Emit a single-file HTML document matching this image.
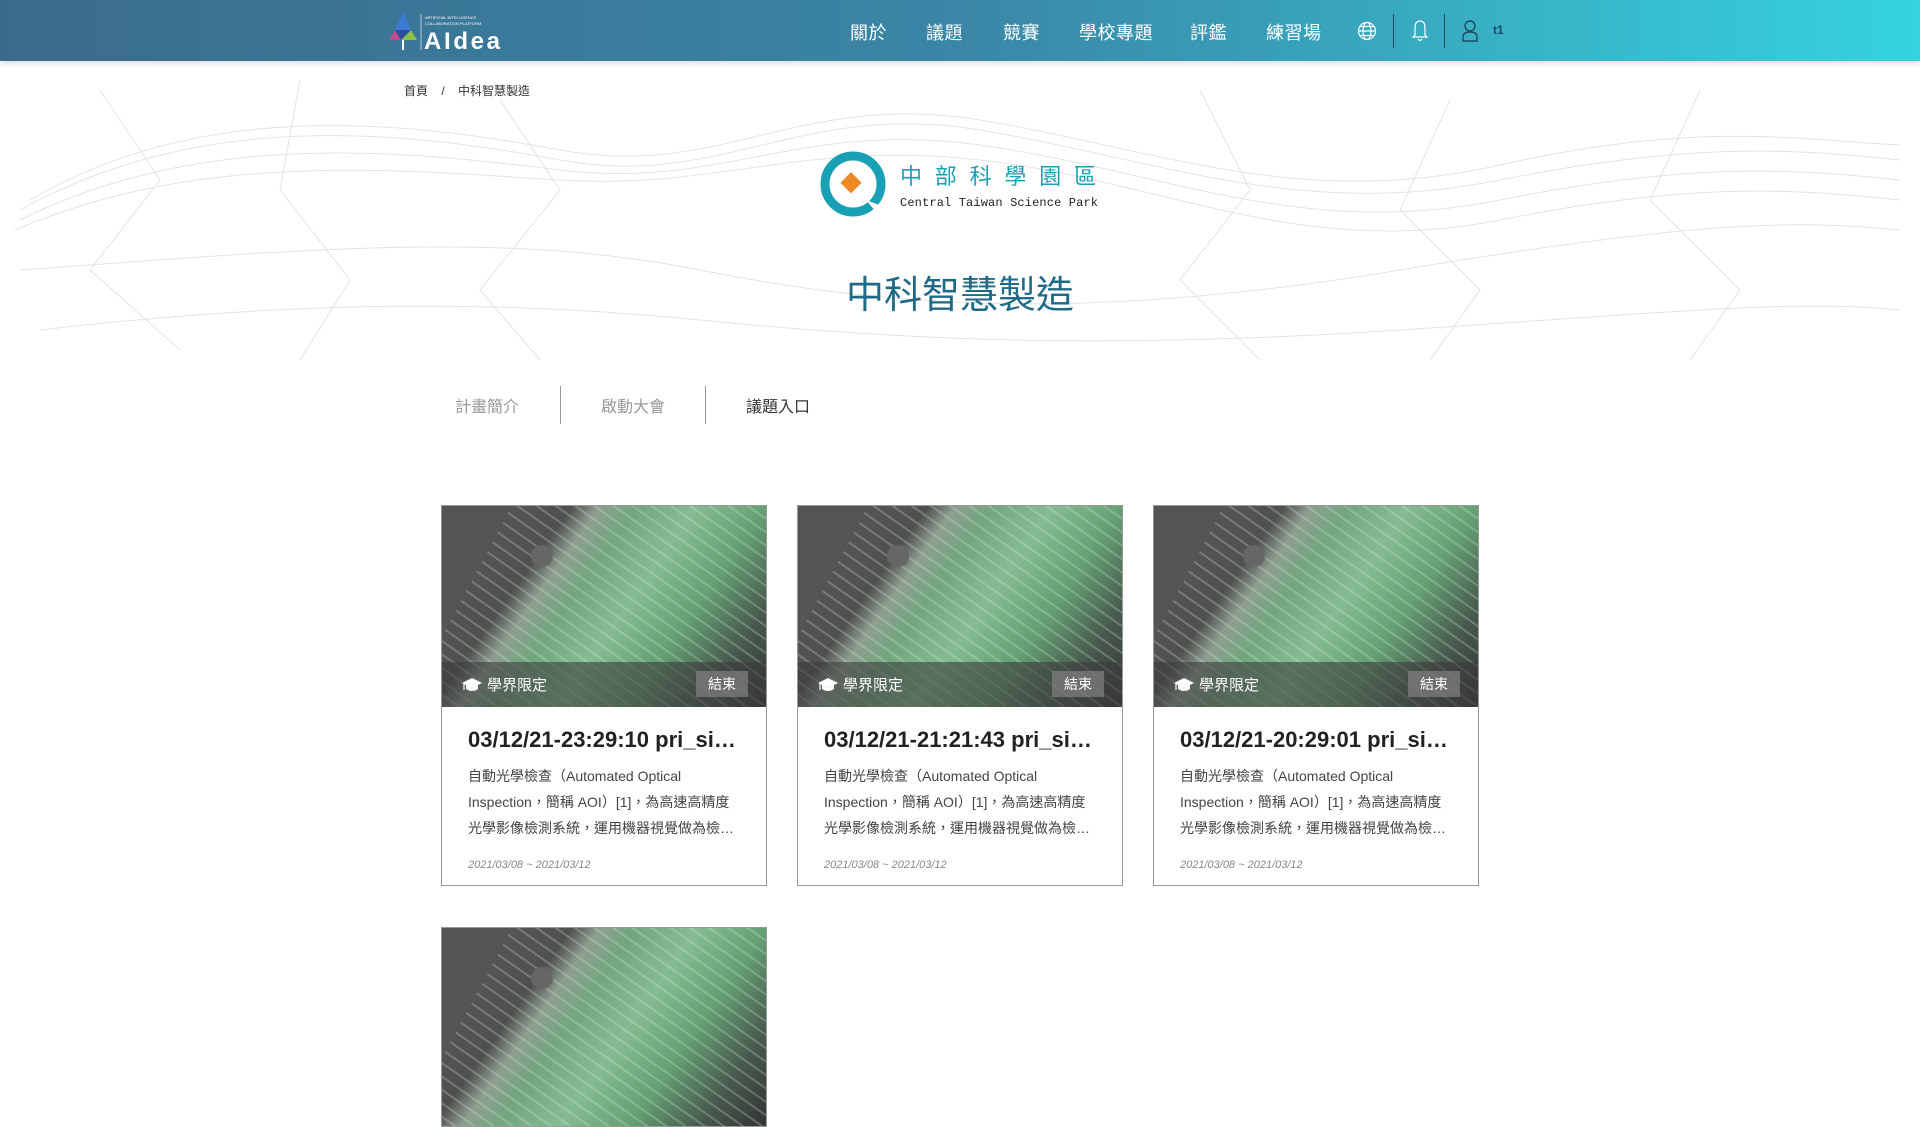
<!DOCTYPE html>
<html><head><meta charset="utf-8">
<style>
*{margin:0;padding:0;box-sizing:border-box}
body{width:1920px;height:1080px;overflow:hidden;background:#fff;font-family:"Liberation Sans","Noto Sans CJK TC",sans-serif;position:relative}
.hdr{position:absolute;left:0;top:0;width:1920px;height:61px;background:linear-gradient(90deg,#3b6b8c 0%,#3a86a6 50%,#35d3df 100%);box-shadow:0 2px 6px rgba(0,0,0,.15)}
.nav{position:absolute;top:19px;color:#fff;font-size:18px;letter-spacing:.5px}
.vd{position:absolute;top:14px;width:1px;height:34px;background:#1f4a60}
.bc{position:absolute;top:82px;left:404px;font-size:12px;color:#333}
.card{position:absolute;width:326px;height:381px;border:1px solid #999;background:#fff;overflow:hidden}
.img{position:absolute;left:0;top:0;width:324px;height:201px;
background:
radial-gradient(circle at 100px 50px,#666 0 10px,transparent 12px),
repeating-linear-gradient(35deg,rgba(255,255,255,0) 0 9px,rgba(220,245,225,.25) 9px 11px),
linear-gradient(125deg,#5a5a5a 0%,#505050 28%,#8e9e90 34%,#72a67f 42%,#86bc93 55%,#64a073 70%,#485a4e 85%,#333 100%)}
.chip{position:absolute;left:0;top:0;width:0;height:0;border-top:130px solid #555;border-right:70px solid transparent}
.bar{position:absolute;left:0;top:156px;width:324px;height:45px;background:rgba(60,60,60,.6)}
.bar .l{position:absolute;left:20px;top:12px;color:#fff;font-size:15px;display:flex;align-items:center;gap:5px}
.bar .r{position:absolute;right:18px;top:9px;width:52px;height:26px;background:rgba(130,130,130,.7);color:#fff;font-size:14px;text-align:center;line-height:26px}
.t{position:absolute;left:26px;top:221px;font-size:22px;font-weight:bold;color:#222;white-space:nowrap}
.d{position:absolute;left:26px;top:257px;width:275px;font-size:14px;line-height:26px;color:#444}
.dt{position:absolute;left:26px;top:353px;font-size:11px;font-style:italic;color:#888}
.tab{position:absolute;top:393px;font-size:16px}
</style></head><body>
<svg style="position:absolute;left:0;top:70px" width="1920" height="290" viewBox="0 0 1920 290">
<g fill="none" stroke="#ddd" stroke-width="1" opacity=".8">
<path d="M20 140 C200 40 400 60 560 90 S800 30 980 60 S1300 150 1500 110 S1800 80 1900 90"/>
<path d="M20 150 C200 60 400 80 560 100 S800 50 980 75 S1300 170 1500 130 S1800 100 1900 110"/>
<path d="M15 160 C200 80 400 100 560 110 S800 70 980 90 S1300 190 1500 150 S1800 120 1900 130"/>
<path d="M30 130 C200 30 400 50 560 80 S800 20 980 50 S1300 140 1500 95 S1800 70 1900 75"/>
<path d="M20 200 C300 180 500 160 700 200 S1100 250 1400 200 S1800 150 1900 160"/>
<path d="M40 260 C300 230 500 230 700 250 S1100 280 1400 260 S1800 230 1900 240"/>
<path d="M100 20 L160 110 L90 200 L180 280 M300 10 L280 120 L350 210 L300 290 M500 30 L560 120 L480 220 L540 290 M1200 20 L1250 120 L1180 210 L1260 290 M1450 30 L1400 140 L1480 220 L1430 290 M1700 20 L1650 130 L1740 220 L1690 290"/>
</g></svg>
<div class="hdr">
<svg style="position:absolute;left:387px;top:10px" width="115" height="42" viewBox="0 0 115 42">
<polygon points="16,2 8,20 24,20" fill="#3a7bd5"/><polygon points="8,20 2,30 14,30" fill="#c04b8c"/><polygon points="24,20 30,30 14,30" fill="#8bc34a"/><polygon points="8,20 24,20 14,30" fill="#2c4d9e"/><rect x="15" y="30" width="2" height="10" fill="#fff"/>
<line x1="34" y1="4" x2="34" y2="40" stroke="#fff" stroke-width=".6"/>
<text x="38" y="9" font-size="4" fill="#fff">ARTIFICIAL INTELLIGENCE</text><text x="38" y="15" font-size="4" fill="#fff">COLLABORATION PLATFORM</text>
<text x="37" y="39" font-size="24" fill="#fff" font-weight="bold" font-family="Liberation Sans" textLength="76">AIdea</text></svg>
<div class="nav" style="left:850px">關於</div>
<div class="nav" style="left:926px">議題</div>
<div class="nav" style="left:1003px">競賽</div>
<div class="nav" style="left:1079px">學校專題</div>
<div class="nav" style="left:1190px">評鑑</div>
<div class="nav" style="left:1266px">練習場</div>
<svg style="position:absolute;left:1357px;top:21px" width="20" height="20" viewBox="0 0 20 20" fill="none" stroke="#fff" stroke-width="1.2"><circle cx="10" cy="10" r="8.5"/><ellipse cx="10" cy="10" rx="4" ry="8.5"/><line x1="1.5" y1="10" x2="18.5" y2="10"/><line x1="3" y1="5.5" x2="17" y2="5.5"/><line x1="3" y1="14.5" x2="17" y2="14.5"/></svg>
<div class="vd" style="left:1393px"></div>
<svg style="position:absolute;left:1411px;top:19px" width="18" height="24" viewBox="0 0 18 24" fill="none" stroke="#fff" stroke-width="1.2"><path d="M9 2 C4 2 4 7 4 11 L4 16 L2 18 L16 18 L14 16 L14 11 C14 7 14 2 9 2Z"/><path d="M7 20 Q9 23 11 20"/></svg>
<div class="vd" style="left:1444px"></div>
<svg style="position:absolute;left:1461px;top:19px" width="18" height="24" viewBox="0 0 18 24" fill="none" stroke="#1f4a60" stroke-width="1.4"><circle cx="9" cy="7" r="5"/><path d="M2 22 L2 18 Q2 13 9 13 Q16 13 16 18 L16 22 Z"/></svg>
<div style="position:absolute;left:1493px;top:23px;font-size:12px;font-weight:bold;color:#1f4a60">t1</div>
</div>
<div class="bc">首頁 &nbsp;&nbsp; / &nbsp;&nbsp; 中科智慧製造</div>
<svg style="position:absolute;left:818px;top:150px" width="285" height="70" viewBox="0 0 285 70">
<circle cx="35" cy="34" r="28" fill="none" stroke="#1aa0b4" stroke-width="9"/>
<rect x="26" y="25" width="15" height="15" fill="#ef8a22" transform="rotate(45 33 32)"/>
<path d="M48 50 L58 62 L64 56 Z" fill="#fff"/>
<text x="82" y="34" font-size="22" fill="#1aa0b4" font-family="Noto Sans CJK TC" textLength="196">中部科學園區</text>
<text x="82" y="56" font-size="12" fill="#222" font-family="Liberation Mono" textLength="198">Central Taiwan Science Park</text>
</svg>
<div style="position:absolute;left:0;width:1920px;top:264px;text-align:center;font-size:38px;color:#1f6a87">中科智慧製造</div>
<div class="tab" style="left:455px;color:#999">計畫簡介</div>
<div style="position:absolute;left:560px;top:386px;width:1px;height:38px;background:#999"></div>
<div class="tab" style="left:601px;color:#999">啟動大會</div>
<div style="position:absolute;left:705px;top:386px;width:1px;height:38px;background:#999"></div>
<div class="tab" style="left:746px;color:#333">議題入口</div>

<div class="card" style="left:441px;top:505px"><div class="img"><div class="chip"></div></div><div class="bar"><div class="l"><svg width="20" height="14" viewBox="0 0 20 14"><path d="M0 5 L10 0 L20 5 L10 10Z" fill="#fff"/><path d="M4 7 L4 11 Q10 15 16 11 L16 7 L10 10Z" fill="#fff"/><path d="M2 6 L2 12" stroke="#fff" stroke-width="1.2"/></svg>學界限定</div><div class="r">結束</div></div><div class="t">03/12/21-23:29:10 pri_si…</div><div class="d">自動光學檢查（Automated Optical Inspection，簡稱 AOI）[1]，為高速高精度光學影像檢測系統，運用機器視覺做為檢…</div><div class="dt">2021/03/08 ~ 2021/03/12</div></div>
<div class="card" style="left:797px;top:505px"><div class="img"><div class="chip"></div></div><div class="bar"><div class="l"><svg width="20" height="14" viewBox="0 0 20 14"><path d="M0 5 L10 0 L20 5 L10 10Z" fill="#fff"/><path d="M4 7 L4 11 Q10 15 16 11 L16 7 L10 10Z" fill="#fff"/><path d="M2 6 L2 12" stroke="#fff" stroke-width="1.2"/></svg>學界限定</div><div class="r">結束</div></div><div class="t">03/12/21-21:21:43 pri_si…</div><div class="d">自動光學檢查（Automated Optical Inspection，簡稱 AOI）[1]，為高速高精度光學影像檢測系統，運用機器視覺做為檢…</div><div class="dt">2021/03/08 ~ 2021/03/12</div></div>
<div class="card" style="left:1153px;top:505px"><div class="img"><div class="chip"></div></div><div class="bar"><div class="l"><svg width="20" height="14" viewBox="0 0 20 14"><path d="M0 5 L10 0 L20 5 L10 10Z" fill="#fff"/><path d="M4 7 L4 11 Q10 15 16 11 L16 7 L10 10Z" fill="#fff"/><path d="M2 6 L2 12" stroke="#fff" stroke-width="1.2"/></svg>學界限定</div><div class="r">結束</div></div><div class="t">03/12/21-20:29:01 pri_si…</div><div class="d">自動光學檢查（Automated Optical Inspection，簡稱 AOI）[1]，為高速高精度光學影像檢測系統，運用機器視覺做為檢…</div><div class="dt">2021/03/08 ~ 2021/03/12</div></div>
<div class="card" style="left:441px;top:927px;height:200px"><div class="img"><div class="chip"></div></div></div>
</body></html>
